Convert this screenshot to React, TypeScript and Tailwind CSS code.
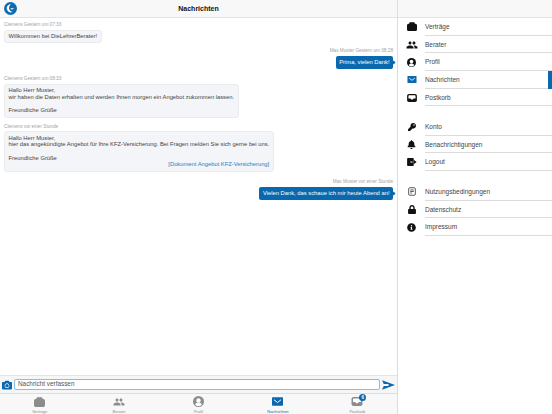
import type { ReactNode } from "react";
import { FaKey, FaBell, FaLock, FaInfoCircle, FaCamera } from "react-icons/fa";
import { MdPeople } from "react-icons/md";

const font = { fontFamily: '"Liberation Sans", Arial, sans-serif' };

function BriefcaseIcon({ className }: { className?: string }) {
  return (
    <svg viewBox="0 0 20 18" className={className} fill="currentColor">
      <path d="M6 0.5h8a1.5 1.5 0 0 1 1.5 1.5v1.5h1.5a3 3 0 0 1 3 3v8.5a3 3 0 0 1-3 3H3a3 3 0 0 1-3-3V6.500a3 3 0 0 1 3-3h1.500V2A1.500 1.500 0 0 1 6 0.500z" />
    </svg>
  );
}

function ProfileIcon({ className }: { className?: string }) {
  return (
    <svg viewBox="0 0 20 20" className={className}>
      <circle cx="10" cy="10" r="10" fill="currentColor" />
      <circle cx="10" cy="8" r="4" fill="white" />
      <path d="M3.800 16c1-3 3.500-4 6.200-4s5.200 1 6.200 4a8.500 8.500 0 0 1-12.400 0z" fill="white" />
    </svg>
  );
}

function MailIcon({ className }: { className?: string }) {
  return (
    <svg viewBox="0 0 22 17" className={className}>
      <rect width="22" height="17" rx="1.500" fill="currentColor" />
      <path d="M4 5l7 5.500L18 5" fill="none" stroke="white" strokeWidth="2" />
    </svg>
  );
}

function InboxIcon({ className }: { className?: string }) {
  return (
    <svg viewBox="0 0 22 18" className={className}>
      <rect width="22" height="18" rx="4" fill="currentColor" />
      <path d="M3 4.500a1.500 1.500 0 0 1 1.500-1.500h13A1.500 1.500 0 0 1 19 4.500V10h-4.500l-1.500 2.500H9L7.500 10H3z" fill="white" />
    </svg>
  );
}

function LogoutIcon({ className }: { className?: string }) {
  return (
    <svg viewBox="0 0 22 18" className={className} fill="currentColor">
      <path d="M2 0h11a2 2 0 0 1 2 2v5H8v4h7v5a2 2 0 0 1-2 2H2a2 2 0 0 1-2-2V2a2 2 0 0 1 2-2z" />
      <path d="M9.500 7.500h6V4.500l6 4.500-6 4.500v-3h-6z" />
    </svg>
  );
}

function TermsIcon({ className }: { className?: string }) {
  return (
    <svg viewBox="0 0 18 20" className={className} fill="none" stroke="currentColor" strokeWidth="1.800">
      <rect x="1.500" y="1.500" width="15" height="17" rx="2.500" />
      <path d="M5 6.500h8M5 10h8M5 13.500h4" />
    </svg>
  );
}

function SendIcon({ className }: { className?: string }) {
  return (
    <svg viewBox="0 0 22 16" className={className} fill="currentColor">
      <path d="M0 0l22 8L0 16l3-6.500h8v-3H3z" />
    </svg>
  );
}

function Logo() {
  return (
    <svg viewBox="0 0 26 26" className="w-[13px] h-[13px]">
      <circle cx="13" cy="13" r="13" fill="#0f6cb0" />
      <path d="M14 4c-6 1-10 6-8 11 2 5 7 7 11 5-4-1-7-4-7-8 0-3 2-6 4-8z" fill="white" />
      <path d="M12 14c3-3 6-3 10 0-3-1-5 0-6 2-1-2-2-2-4-2z" fill="#cfe3f3" />
    </svg>
  );
}

function Incoming({ meta, children }: { meta: string; children: ReactNode }) {
  return (
    <div className="flex flex-col items-start">
      <div className="text-[4.700px] leading-[6px] text-[#a3a3a3] mb-[1.500px] pl-1">{meta}</div>
      <div className="relative ml-1 bg-[#f3f5f8] border border-[#e9ebef] rounded-[3px] px-[3.500px] py-[2.500px] text-[5.800px] leading-[6.700px] text-[#444]">
        <span className="absolute -left-[2px] top-[4px] w-[3px] h-[3px] rotate-45 bg-[#f3f5f8]" />
        {children}
      </div>
    </div>
  );
}

function Outgoing({ meta, text }: { meta: string; text: string }) {
  return (
    <div className="flex flex-col items-end">
      <div className="text-[4.700px] leading-[6px] text-[#a3a3a3] mb-[2px] pr-[4px]">{meta}</div>
      <div className="relative mr-[4px] bg-[#0a69ae] rounded-[2px] px-[3.500px] h-[13px] flex items-center text-[5.800px] text-white">
        <span className="absolute -right-[1.500px] top-[5px] w-[3px] h-[3px] rotate-45 bg-[#0a69ae]" />
        {text}
      </div>
    </div>
  );
}

function MenuRow({ icon, label, active }: { icon: ReactNode; label: string; active?: boolean }) {
  return (
    <div className="relative flex items-center h-[17.700px]">
      <div className="w-[27px] flex justify-center shrink-0">{icon}</div>
      <div className="flex-1 h-full flex items-center pt-[1px] border-b border-[#dcdcdc] text-[6.500px] text-[#444]">{label}</div>
      {active && <span className="absolute right-0 top-0 w-[4px] h-full bg-[#0a69ae]" />}
    </div>
  );
}

function Tab({ icon, label, active }: { icon: ReactNode; label: string; active?: boolean }) {
  return (
    <div className={`flex-1 flex flex-col items-center text-[4px] leading-[5px] ${active ? "text-[#0a69ae]" : "text-[#8c8c8c]"}`}>
      <div className="h-[13px] flex items-center justify-center relative">{icon}</div>
      <span className="mt-[1px]">{label}</span>
    </div>
  );
}

export default function App() {
  return (
    <div className="w-[552px] h-[414px] flex bg-white overflow-hidden" style={font}>
      <div className="w-[398px] h-full flex flex-col border-r border-[#dddddd] shrink-0">
        <div className="h-[18px] shrink-0 bg-[#f8f8f8] border-b border-[#e4e4e4] flex items-center relative">
          <div className="pl-[4px]"><Logo /></div>
          <span className="absolute left-0 right-0 pt-[2px] text-center text-[7px] font-bold text-[#111]">Nachrichten</span>
        </div>

        <div className="flex-1 flex flex-col pt-[4px]">
          <Incoming meta="Clemens Gestern um 07:33">Willkommen bei DieLehrerBerater!</Incoming>
          <div className="mt-[5px]">
            <Outgoing meta="Max Muster Gestern um 08:28" text="Prima, vielen Dank!" />
          </div>
          <div className="mt-[7px]">
            <Incoming meta="Clemens Gestern um 08:33">
              Hallo Herr Muster,
              <br />
              wir haben die Daten erhalten und werden Ihnen morgen ein Angebot zukommen lassen.
              <br />
              <br />
              Freundliche Grüße
            </Incoming>
          </div>
          <div className="mt-[6px]">
            <Incoming meta="Clemens vor einer Stunde">
              Hallo Herr Muster,
              <br />
              hier das angekündigte Angebot für Ihre KFZ-Versicherung. Bei Fragen melden Sie sich gerne bei uns.
              <br />
              <br />
              Freundliche Grüße
              <div className="text-right text-[#1f7fc0]">[Dokument Angebot KFZ-Versicherung]</div>
            </Incoming>
          </div>
          <div className="mt-[7px]">
            <Outgoing meta="Max Muster vor einer Stunde" text="Vielen Dank, das schaue ich mir heute Abend an!" />
          </div>
        </div>

        <div className="h-[18px] shrink-0 bg-[#f5f6f8] border-t border-[#e4e4e4] flex items-center pl-[2px] gap-[2px]">
          <FaCamera className="w-[10px] h-[10px] text-[#0a69ae] shrink-0" />
          <div className="w-[366px] h-[11px] bg-white border border-[#8fbbdc] rounded-[2px] flex items-center px-[3px] pb-[1px] text-[6.400px] text-[#555]">
            Nachricht verfassen
          </div>
          <SendIcon className="w-[13px] h-[10px] text-[#0a69ae]" />
        </div>

        <div className="h-[21px] shrink-0 bg-[#f8f8f8] border-t border-[#dddddd] flex pt-[1px]">
          <Tab label="Verträge" icon={<BriefcaseIcon className="w-[11px] h-[10px]" />} />
          <Tab label="Berater" icon={<MdPeople className="w-[12px] h-[12px]" />} />
          <Tab label="Profil" icon={<ProfileIcon className="w-[11px] h-[11px]" />} />
          <Tab label="Nachrichten" active icon={<MailIcon className="w-[11px] h-[9px]" />} />
          <Tab
            label="Postkorb"
            icon={
              <>
                <InboxIcon className="w-[12px] h-[9px]" />
                <span className="absolute -right-[3px] top-[-1px] w-[7px] h-[7px] rounded-full bg-[#0a69ae] text-white text-[4.500px] font-bold flex items-center justify-center">6</span>
              </>
            }
          />
        </div>
      </div>

      <div className="flex-1 flex flex-col text-[#111]">
        <div className="h-[18px] shrink-0 bg-[#f8f8f8] border-b border-[#e4e4e4]" />
        <MenuRow label="Verträge" icon={<BriefcaseIcon className="w-[10px] h-[9px]" />} />
        <MenuRow label="Berater" icon={<MdPeople className="w-[12px] h-[12px]" />} />
        <MenuRow label="Profil" icon={<ProfileIcon className="w-[9px] h-[9px]" />} />
        <MenuRow label="Nachrichten" active icon={<MailIcon className="w-[10px] h-[7px] text-[#0a69ae]" />} />
        <MenuRow label="Postkorb" icon={<InboxIcon className="w-[10px] h-[8px]" />} />

        <div className="h-[11.500px]" />
        <MenuRow label="Konto" icon={<FaKey className="w-[8px] h-[8px]" />} />
        <MenuRow label="Benachrichtigungen" icon={<FaBell className="w-[9px] h-[9px]" />} />
        <MenuRow label="Logout" icon={<LogoutIcon className="w-[10px] h-[8px]" />} />

        <div className="h-[12px]" />
        <MenuRow label="Nutzungsbedingungen" icon={<TermsIcon className="w-[8px] h-[9px] text-[#333]" />} />
        <MenuRow label="Datenschutz" icon={<FaLock className="w-[8px] h-[9px]" />} />
        <MenuRow label="Impressum" icon={<FaInfoCircle className="w-[9px] h-[9px]" />} />
      </div>
    </div>
  );
}
